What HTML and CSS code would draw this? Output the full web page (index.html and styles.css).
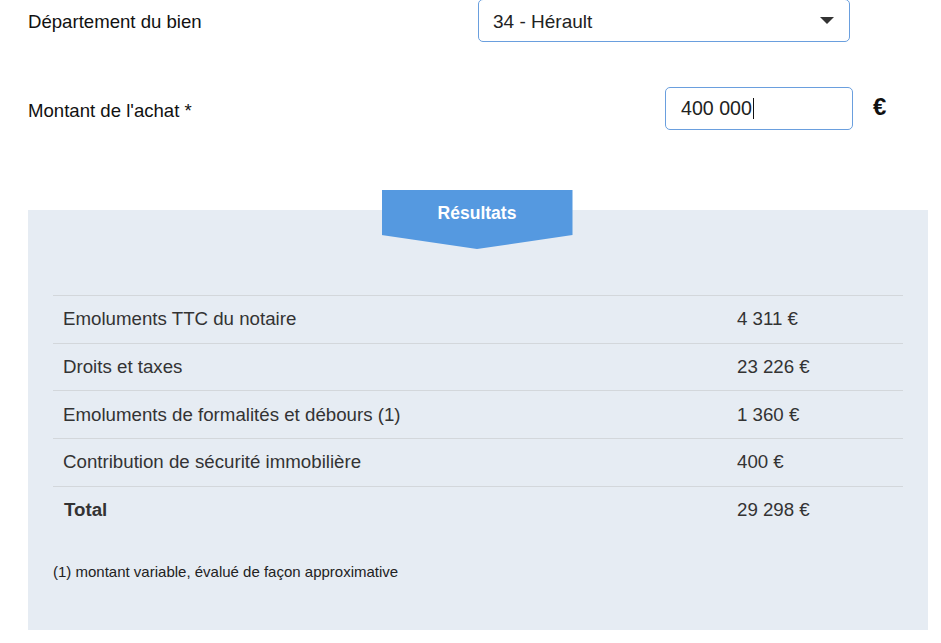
FILE: index.html
```html
<!DOCTYPE html>
<html lang="fr">
<head>
<meta charset="utf-8">
<title>Frais de notaire</title>
<link rel="stylesheet" href="styles.css">
</head>
<body>
<div class="page">
  <div class="field-row row-dept">
    <label class="field-label">Département du bien</label>
    <div class="select">
      <span class="select-value">34 - Hérault</span>
      <span class="select-caret"></span>
    </div>
  </div>
  <div class="field-row row-amount">
    <label class="field-label">Montant de l'achat *</label>
    <div class="input"><span>400 000</span><span class="caret"></span></div>
    <span class="unit">€</span>
  </div>

  <section class="results">
    <div class="banner">Résultats</div>
    <table class="res-table">
      <tr><td class="lbl">Emoluments TTC du notaire</td><td class="val">4 311 €</td></tr>
      <tr><td class="lbl">Droits et taxes</td><td class="val">23 226 €</td></tr>
      <tr><td class="lbl">Emoluments de formalités et débours (1)</td><td class="val">1 360 €</td></tr>
      <tr><td class="lbl">Contribution de sécurité immobilière</td><td class="val">400 €</td></tr>
      <tr class="total"><td class="lbl">Total</td><td class="val">29 298 €</td></tr>
    </table>
    <p class="note">(1) montant variable, évalué de façon approximative</p>
  </section>
</div>
</body>
</html>
```
FILE: styles.css
```css
html, body {
  margin: 0;
  padding: 0;
  background: #fff;
}
body {
  font-family: "Liberation Sans", Arial, sans-serif;
  color: #111;
}
.page {
  width: 900px;
  padding-left: 28px;
}
.field-row {
  display: flex;
  align-items: center;
}
.field-label {
  font-size: 18.6px;
  color: #111;
}
.row-dept {
  height: 42px;
}
.row-dept .field-label {
  width: 450px;
  position: relative;
  top: 1px;
}
.select {
  box-sizing: border-box;
  width: 372px;
  height: 43px;
  border: 1px solid #6a9fde;
  border-radius: 5px;
  display: flex;
  align-items: center;
  justify-content: space-between;
  padding: 0 14px 0 14px;
  margin-top: -1px;
}
.select-value {
  font-size: 19px;
  color: #222;
  position: relative;
  top: 1px;
}
.select-caret {
  width: 0;
  height: 0;
  border-left: 7px solid transparent;
  border-right: 7px solid transparent;
  border-top: 7px solid #333;
  margin-right: 1px;
}
.row-amount {
  margin-top: 45px;
  height: 43px;
}
.row-amount .field-label {
  flex: 1;
  position: relative;
  top: 2px;
}
.input {
  box-sizing: border-box;
  width: 188px;
  height: 43px;
  border: 1px solid #6a9fde;
  border-radius: 5px;
  display: flex;
  align-items: center;
  padding-left: 15px;
  font-size: 19.6px;
  color: #222;
  margin-top: -1px;
}
.caret {
  display: inline-block;
  width: 1px;
  height: 21px;
  background: #111;
  margin-left: 1px;
}
.unit {
  width: 55px;
  padding-left: 20px;
  font-size: 24px;
  font-weight: bold;
  color: #111;
  margin-top: -4px;
}
.results {
  margin-top: 80px;
  background: #e6ecf3;
  height: 420px;
  padding: 0 25px;
  box-sizing: border-box;
  display: flex;
  flex-direction: column;
}
.banner {
  align-self: center;
  margin-top: -20px;
  margin-left: -2px;
  width: 191px;
  height: 59px;
  box-sizing: border-box;
  padding-top: 13px;
  background: #5599e0;
  color: #fff;
  font-weight: bold;
  font-size: 17.5px;
  text-align: center;
  clip-path: polygon(0 0, 100% 0, 100% 45px, 50% 59px, 0 45px);
}
.res-table {
  margin-top: 46px;
  width: 850px;
  border-collapse: collapse;
  font-size: 18.7px;
  color: #333;
}
.res-table td {
  border-top: 1px solid #d3d7db;
  height: 46.7px;
  padding: 0 10px;
  vertical-align: middle;
}
.res-table td.lbl {
  width: 654px;
}
.res-table td.val {
  padding-left: 9px;
}
.res-table tr.total td.lbl {
  font-weight: bold;
  padding-left: 11px;
}
.note {
  margin: 30px 0 0 0;
  font-size: 15px;
  color: #222;
}
```
